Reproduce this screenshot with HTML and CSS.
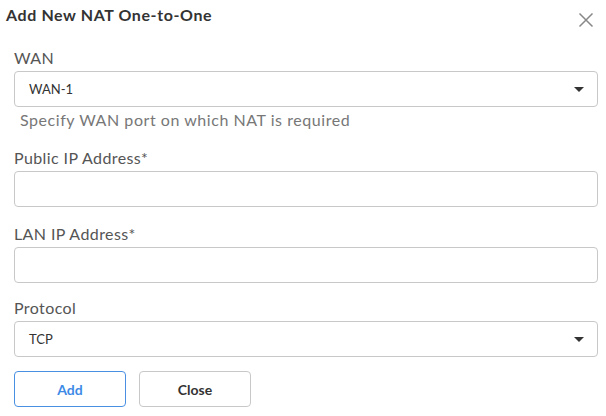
FILE: index.html
```html
<!DOCTYPE html>
<html>
<head>
<meta charset="utf-8">
<link rel="stylesheet" href="styles.css">
</head>
<body>
<div class="modal">
  <div class="header">
    <h1 class="title">Add New NAT One-to-One</h1>
    <span class="close-x"><svg width="16" height="16" viewBox="0 0 16 16"><path d="M1.5 1.5L14.5 14.5M14.5 1.5L1.5 14.5" stroke="#888" stroke-width="1.5" fill="none"/></svg></span>
  </div>
  <div class="field">
    <label class="label">WAN</label>
    <div class="select"><span>WAN-1</span><span class="caret"></span></div>
    <div class="help">Specify WAN port on which NAT is required</div>
  </div>
  <div class="field">
    <label class="label">Public IP Address*</label>
    <div class="input input-public"></div>
  </div>
  <div class="field">
    <label class="label">LAN IP Address*</label>
    <div class="input input-lan"></div>
  </div>
  <div class="field">
    <label class="label">Protocol</label>
    <div class="select select-protocol"><span>TCP</span><span class="caret"></span></div>
  </div>
  <div class="actions">
    <button class="btn btn-add">Add</button>
    <button class="btn btn-close">Close</button>
  </div>
</div>
</body>
</html>
```
FILE: styles.css
```css
html, body { margin: 0; padding: 0; background: #fff; }
body { font-family: "Lato", "Liberation Sans", sans-serif; color: #333; }
.modal { width: 606px; padding: 0 8px 0 14px; box-sizing: border-box; }
.header { display: flex; justify-content: space-between; align-items: flex-start; margin-left: -8px; height: 44px; }
.title { margin: 5px 0 0 0; font-size: 16px; font-weight: 700; color: #333; line-height: 20px; letter-spacing: 0.6px; }
.close-x { margin-top: 12px; margin-right: 4px; width: 16px; height: 16px; display: block; }
.close-x svg { display: block; }
.field { display: flex; flex-direction: column; }
.label { font-size: 16px; color: #555; line-height: 20px; height: 27px; padding-top: 4px; box-sizing: border-box; letter-spacing: 0.4px; }
.select, .input { height: 36px; border: 1px solid #c8c8c8; border-radius: 4px; box-sizing: border-box; display: flex; align-items: center; justify-content: space-between; padding: 0 13px 0 14px; font-size: 13px; color: #333; }
.input-public { margin-bottom: 13px; }
.input-lan { margin-bottom: 11px; }
.select-protocol { margin-bottom: 14px; }
.caret { width: 0; height: 0; border-left: 5px solid transparent; border-right: 5px solid transparent; border-top: 5px solid #333; }
.help { font-size: 16px; color: #777; padding-left: 6px; line-height: 20px; height: 37px; padding-top: 3px; box-sizing: border-box; letter-spacing: 0.55px; }
.actions { display: flex; gap: 13px; }
.btn { width: 112px; height: 36px; border-radius: 4px; background: #fff; font-family: "Lato", "Liberation Sans", sans-serif; font-size: 14px; font-weight: 700; cursor: pointer; }
.btn-add { border: 1px solid #4a90e2; color: #3d8ae6; }
.btn-close { border: 1px solid #c8c8c8; color: #333; }
```
